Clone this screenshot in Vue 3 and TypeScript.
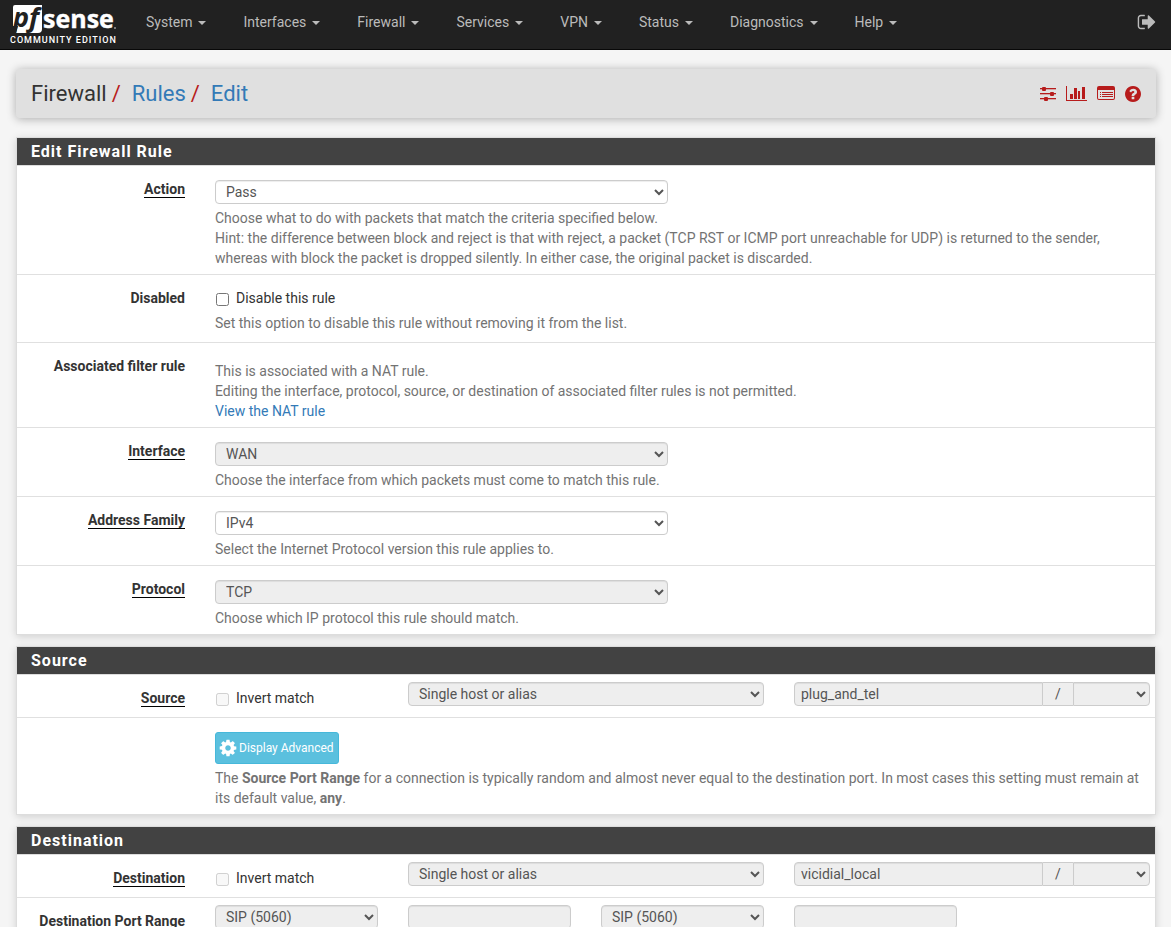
<script setup lang="ts">
interface MenuItem {
  label: string
}

interface Crumb {
  label: string
  link: boolean
}

const menu: MenuItem[] = [
  { label: 'System' },
  { label: 'Interfaces' },
  { label: 'Firewall' },
  { label: 'Services' },
  { label: 'VPN' },
  { label: 'Status' },
  { label: 'Diagnostics' },
  { label: 'Help' },
]

const crumbs: Crumb[] = [
  { label: 'Firewall', link: false },
  { label: 'Rules', link: true },
  { label: 'Edit', link: true },
]
</script>

<template>
  <div class="page">
    <header class="navbar">
      <a class="brand" href="#" aria-label="pfSense Community Edition">
        <svg class="logo" width="106" height="31" viewBox="0 0 106 31" aria-hidden="true">
          <path d="M5 1h27v24q0 4-4 4H6L8 22H3V3q0-2 2-2z" fill="#fff" />
          <text x="3" y="23" class="logo-pf">pf</text>
          <text x="33" y="24" class="logo-sense">sense</text>
          <circle cx="105" cy="24" r="1" fill="#999" />
        </svg>
        <span class="edition">COMMUNITY EDITION</span>
      </a>
      <nav class="menu">
        <a v-for="item in menu" :key="item.label" class="menu-item" href="#">
          {{ item.label }}<span class="caret"></span>
        </a>
      </nav>
      <a class="logout" href="#" aria-label="Logout">
        <svg width="20" height="20" viewBox="0 0 1792 1792" fill="currentColor">
          <path d="M704 1440q0 4 1 20t.5 26.500-3 23.500-10 19.500-20.500 6.500h-320q-119 0-203.500-84.500t-84.500-203.500v-704q0-119 84.500-203.500t203.500-84.500h320q13 0 22.500 9.500t9.500 22.500q0 4 1 20t.5 26.500-3 23.500-10 19.500-20.500 6.500h-320q-66 0-113 47t-47 113v704q0 66 47 113t113 47h312l11.500 1 11.500 3 8 5.500 7 9 2 13.500zm928-544q0 26-19 45l-544 544q-19 19-45 19t-45-19-19-45v-288h-448q-26 0-45-19t-19-45v-384q0-26 19-45t45-19h448v-288q0-26 19-45t45-19 45 19l544 544q19 19 19 45z" />
        </svg>
      </a>
    </header>

    <main class="container">
      <div class="title-bar">
        <ol class="crumbs">
          <li v-for="crumb in crumbs" :key="crumb.label">
            <a v-if="crumb.link" href="#">{{ crumb.label }}</a>
            <span v-else>{{ crumb.label }}</span>
          </li>
        </ol>
        <div class="shortcuts">
          <a href="#" aria-label="Advanced settings">
            <svg width="16" height="16" viewBox="0 0 16 16" fill="currentColor">
              <path d="M0 2h16v1H0zM0 7h16v1H0zM0 12h16v1H0z" />
              <path d="M0 3h16v1H0zM0 8h16v1H0zM0 13h16v1H0z" opacity=".3" />
              <rect x="2" y="1" width="4" height="4" rx="1" />
              <rect x="10" y="6" width="4" height="4" rx="1" />
              <rect x="4" y="11" width="4" height="4" rx="1" />
            </svg>
          </a>
          <a href="#" aria-label="Status">
            <svg width="21" height="16" viewBox="0 0 21 16" fill="currentColor">
              <path d="M0 0h1v14h20v1H0zM4 8h3v5H4zM8 2h3v11H8zM12 5h2v8h-2zM16 1h3v12h-3z" />
            </svg>
          </a>
          <a href="#" aria-label="Logs">
            <svg width="18" height="16" viewBox="0 0 18 16" fill="currentColor">
              <path fill-rule="evenodd" d="M2 0h14q2 0 2 2v10q0 2-2 2H2q-2 0-2-2V2q0-2 2-2zM1 4v8q0 1 1 1h14q1 0 1-1V4z" />
              <path d="M3 6h1v1H3zM5 6h11v1H5zM3 8h1v1H3zM5 8h11v1H5zM3 10h1v1H3zM5 10h11v1H5z" />
            </svg>
          </a>
          <a href="#" aria-label="Help">
            <svg width="16" height="16" viewBox="128 128 1536 1536" fill="currentColor">
              <path d="M1024 1376v-192q0-14-9-23t-23-9h-192q-14 0-23 9t-9 23v192q0 14 9 23t23 9h192q14 0 23-9t9-23zm256-672q0-88-55.500-163t-138.500-116-170-41q-243 0-371 213-15 24 8 42l132 100q7 6 19 6 16 0 25-12 53-68 86-92 34-24 86-24 48 0 85.500 26t37.500 59q0 38-20 61t-68 45q-63 28-115.500 86.500t-52.500 125.500v36q0 14 9 23t23 9h192q14 0 23-9t9-23q0-19 21.500-49.500t54.500-49.500q32-18 49-28.500t46-35 44.500-48 28-60.500 12.500-81zm384 192q0 209-103 385.500t-279.500 279.500-385.500 103-385.500-103-279.500-279.500-103-385.500 103-385.500 279.500-279.500 385.500-103 385.500 103 279.500 279.500 103 385.500z" />
            </svg>
          </a>
        </div>
      </div>

      <form>
        <section class="panel">
          <h2>Edit Firewall Rule</h2>

          <div class="row">
            <label class="label" for="action"><span class="required">Action</span></label>
            <div class="field roomy">
              <select id="action" class="control half"><option>Pass</option></select>
              <p class="help">
                Choose what to do with packets that match the criteria specified below.<br />
                Hint: the difference between block and reject is that with reject, a packet (TCP RST or ICMP port
                unreachable for UDP) is returned to the sender, whereas with block the packet is dropped silently. In
                either case, the original packet is discarded.
              </p>
            </div>
          </div>

          <div class="row">
            <span class="label">Disabled</span>
            <div class="field checks">
              <label class="check"><input type="checkbox" />Disable this rule</label>
              <p class="help">Set this option to disable this rule without removing it from the list.</p>
            </div>
          </div>

          <div class="row">
            <span class="label">Associated filter rule</span>
            <div class="field roomy">
              <p class="help">
                This is associated with a NAT rule.<br />
                Editing the interface, protocol, source, or destination of associated filter rules is not
                permitted.<br />
                <a href="#">View the NAT rule</a>
              </p>
            </div>
          </div>

          <div class="row">
            <label class="label" for="interface"><span class="required">Interface</span></label>
            <div class="field roomy">
              <select id="interface" class="control half" disabled><option>WAN</option></select>
              <p class="help">Choose the interface from which packets must come to match this rule.</p>
            </div>
          </div>

          <div class="row">
            <label class="label" for="family"><span class="required">Address Family</span></label>
            <div class="field roomy">
              <select id="family" class="control half"><option>IPv4</option></select>
              <p class="help">Select the Internet Protocol version this rule applies to.</p>
            </div>
          </div>

          <div class="row">
            <label class="label" for="protocol"><span class="required">Protocol</span></label>
            <div class="field roomy">
              <select id="protocol" class="control half" disabled><option>TCP</option></select>
              <p class="help">Choose which IP protocol this rule should match.</p>
            </div>
          </div>
        </section>

        <section class="panel">
          <h2>Source</h2>

          <div class="row address">
            <label class="label" for="src-type"><span class="required">Source</span></label>
            <label class="check cell"><input type="checkbox" disabled />Invert match</label>
            <div class="cell double">
              <select id="src-type" class="control" disabled><option>Single host or alias</option></select>
            </div>
            <div class="cell double group">
              <input class="control" type="text" value="plug_and_tel" aria-label="Source address" disabled />
              <span class="slash">/</span>
              <select class="control mask" aria-label="Source mask" disabled><option></option></select>
            </div>
          </div>

          <div class="row">
            <span class="label"></span>
            <div class="field roomy">
              <button class="btn-info" type="button">
                <svg width="18" height="18" viewBox="64 64 1664 1664" fill="currentColor" aria-hidden="true">
                  <path d="M1152 896q0-106-75-181t-181-75-181 75-75 181 75 181 181 75 181-75 75-181zm512-109v222q0 12-8 23t-20 13l-185 28q-19 54-39 91 35 50 107 138 10 12 10 25t-9 23q-27 37-99 108t-94 71q-12 0-26-9l-138-108q-44 23-91 38-16 136-29 186-7 28-36 28h-222q-14 0-24.500-8.500t-11.500-21.500l-28-184q-49-16-90-37l-141 107q-10 9-25 9-14 0-25-11-126-114-165-168-7-10-7-23 0-12 8-23 15-21 51-66.500t54-70.500q-27-50-41-99l-183-27q-13-2-21-12.500t-8-23.500v-222q0-12 8-23t19-13l186-28q14-46 39-92-40-57-107-138-10-12-10-24 0-10 9-23 26-36 98.500-107.500t94.500-71.500q13 0 26 10l138 107q44-23 91-38 16-136 29-186 7-28 36-28h222q14 0 24.500 8.500t11.500 21.500l28 184q49 16 90 37l142-107q9-9 24-9 13 0 25 10 129 119 165 170 7 8 7 22 0 12-8 23-15 21-51 66.500t-54 70.500q26 50 41 98l183 28q13 2 21 12.500t8 23.500z" />
                </svg>
                <span>Display Advanced</span>
              </button>
              <p class="help">
                The <b>Source Port Range</b> for a connection is typically random and almost never equal to the
                destination port. In most cases this setting must remain at its default value, <b>any</b>.
              </p>
            </div>
          </div>
        </section>

        <section class="panel">
          <h2>Destination</h2>

          <div class="row address">
            <label class="label" for="dst-type"><span class="required">Destination</span></label>
            <label class="check cell"><input type="checkbox" disabled />Invert match</label>
            <div class="cell double">
              <select id="dst-type" class="control" disabled><option>Single host or alias</option></select>
            </div>
            <div class="cell double group">
              <input class="control" type="text" value="vicidial_local" aria-label="Destination address" disabled />
              <span class="slash">/</span>
              <select class="control mask" aria-label="Destination mask" disabled><option></option></select>
            </div>
          </div>

          <div class="row address">
            <label class="label" for="port-from">Destination Port Range</label>
            <div class="cell">
              <select id="port-from" class="control" disabled><option>SIP (5060)</option></select>
            </div>
            <div class="cell">
              <input class="control" type="text" aria-label="Custom from port" disabled />
            </div>
            <div class="cell">
              <select class="control" aria-label="To port" disabled><option>SIP (5060)</option></select>
            </div>
            <div class="cell">
              <input class="control" type="text" aria-label="Custom to port" disabled />
            </div>
          </div>
        </section>
      </form>
    </main>
  </div>
</template>

<style>
html,
body {
  margin: 0;
  background: #f5f5f5;
}
body {
  overflow: hidden;
}
</style>

<style scoped>
.page {
  font: 14px/20px Roboto, "Liberation Sans", sans-serif;
  color: #333;
}
.page *,
.page *::before {
  box-sizing: border-box;
}
a {
  color: #337ab7;
  text-decoration: none;
}
.navbar {
  display: flex;
  height: 50px;
  background: #212121;
  border-bottom: 1px solid #080808;
}
.brand {
  display: flex;
  flex-direction: column;
  width: 106px;
  margin-left: 10px;
  padding-top: 4px;
  color: #fff;
}
.logo {
  display: block;
  overflow: visible;
}
.logo-pf {
  font: italic 700 27px "Open Sans", sans-serif;
  fill: #212121;
}
.logo-sense {
  font: 700 25px "Open Sans", sans-serif;
  fill: #fff;
  stroke: #fff;
  stroke-width: 0.4;
}
.edition {
  font-size: 9px;
  line-height: 10px;
  font-weight: 500;
  letter-spacing: 1px;
  white-space: nowrap;
}
.menu {
  display: flex;
  flex: 1;
  gap: 37px;
  padding: 12px 0 0 30px;
}
.menu-item {
  color: #bbb;
  white-space: nowrap;
}
.caret {
  display: inline-block;
  margin-left: 6px;
  vertical-align: middle;
  border-top: 4px solid;
  border-left: 4px solid transparent;
  border-right: 4px solid transparent;
}
.logout {
  padding: 12px 14px 0 0;
  color: #bbb;
}
.logout svg {
  display: block;
}
.container {
  padding: 19px 15px 0 16px;
}
.title-bar {
  display: flex;
  align-items: center;
  justify-content: space-between;
  height: 49px;
  margin-bottom: 19px;
  padding: 0 15px;
  background: #e0e0e0;
  border-radius: 4px;
  box-shadow: 0 1px 10px rgba(0, 0, 0, 0.3);
}
.crumbs {
  display: flex;
  margin: 0;
  padding: 0;
  list-style: none;
  font-size: 22px;
  line-height: 30px;
}
.crumbs li + li::before {
  content: "/";
  padding: 0 11px 0 5px;
  color: #b71c1c;
}
.shortcuts {
  display: flex;
  gap: 10px;
}
.shortcuts a {
  color: #b71c1c;
}
.shortcuts svg {
  display: block;
}
.panel {
  margin: 0 0 11px;
  background: #fff;
  border: 1px solid #ddd;
  box-shadow: 0 2px 8px rgba(0, 0, 0, 0.15);
}
.panel h2 {
  margin: 0;
  padding: 0 14px;
  border-bottom: 1px solid #ddd;
  background: #424242;
  color: #fff;
  font-size: 16px;
  line-height: 27px;
  font-weight: 700;
  letter-spacing: 1px;
}
.row {
  display: flex;
  margin: 0 -10px;
  background: linear-gradient(#e0e0e0, #e0e0e0) 10px 0 / calc(100% - 20px) 1px no-repeat;
  padding-top: 1px;
}
h2 + .row {
  background: none;
  padding-top: 0;
}
.label {
  width: calc(100% / 6);
  padding: 13px 15px 0;
  text-align: right;
  font-weight: 700;
  white-space: nowrap;
}
.required {
  display: inline-block;
  line-height: 16px;
  border-bottom: 1px solid #000;
}
.field {
  width: calc(500% / 6);
  padding: 0 15px 6px;
}
.roomy {
  padding-top: 14px;
}
.checks {
  padding-top: 13px;
  padding-bottom: 9px;
}
.half {
  width: calc(50% - 15px);
}
.control {
  display: block;
  height: 24px;
  margin: 0;
  padding: 1px 6px;
  border: 1px solid #ccc;
  border-radius: 4px;
  background-color: #fff;
  box-shadow: inset 0 1px 1px rgba(0, 0, 0, 0.075);
  color: #555;
  font: inherit;
}
.control:disabled {
  background-color: #eee;
  opacity: 1;
}
.help {
  margin: 4px 0 0;
  color: #737373;
}
.check {
  display: flex;
  align-items: flex-start;
}
.check input {
  width: 13px;
  height: 13px;
  margin: 5px 7px 0 1px;
}
.check + .help {
  margin-top: 5px;
}
.address {
  min-height: 42px;
}
.cell {
  width: calc(100% / 6);
  padding: 7px 15px 0;
}
.cell .control {
  width: 100%;
}
.check.cell {
  padding-top: 13px;
}
.double {
  width: calc(200% / 6);
}
.group {
  display: flex;
}
.group input.control {
  flex: 1;
  width: 0;
  border-radius: 4px 0 0 4px;
}
.slash {
  width: 30px;
  height: 24px;
  border: solid #ccc;
  border-width: 1px 0;
  background: #eee;
  color: #555;
  line-height: 22px;
  text-align: center;
}
.group .mask {
  width: 77px;
  border-radius: 0 4px 4px 0;
}
.btn-info {
  display: flex;
  align-items: center;
  gap: 2px;
  height: 32px;
  padding: 0 4px 0 3px;
  border: 1px solid #46b8da;
  border-radius: 3px;
  background: #5bc0de;
  color: #fff;
  font: 12px/20px Roboto, "Liberation Sans", sans-serif;
}
</style>
